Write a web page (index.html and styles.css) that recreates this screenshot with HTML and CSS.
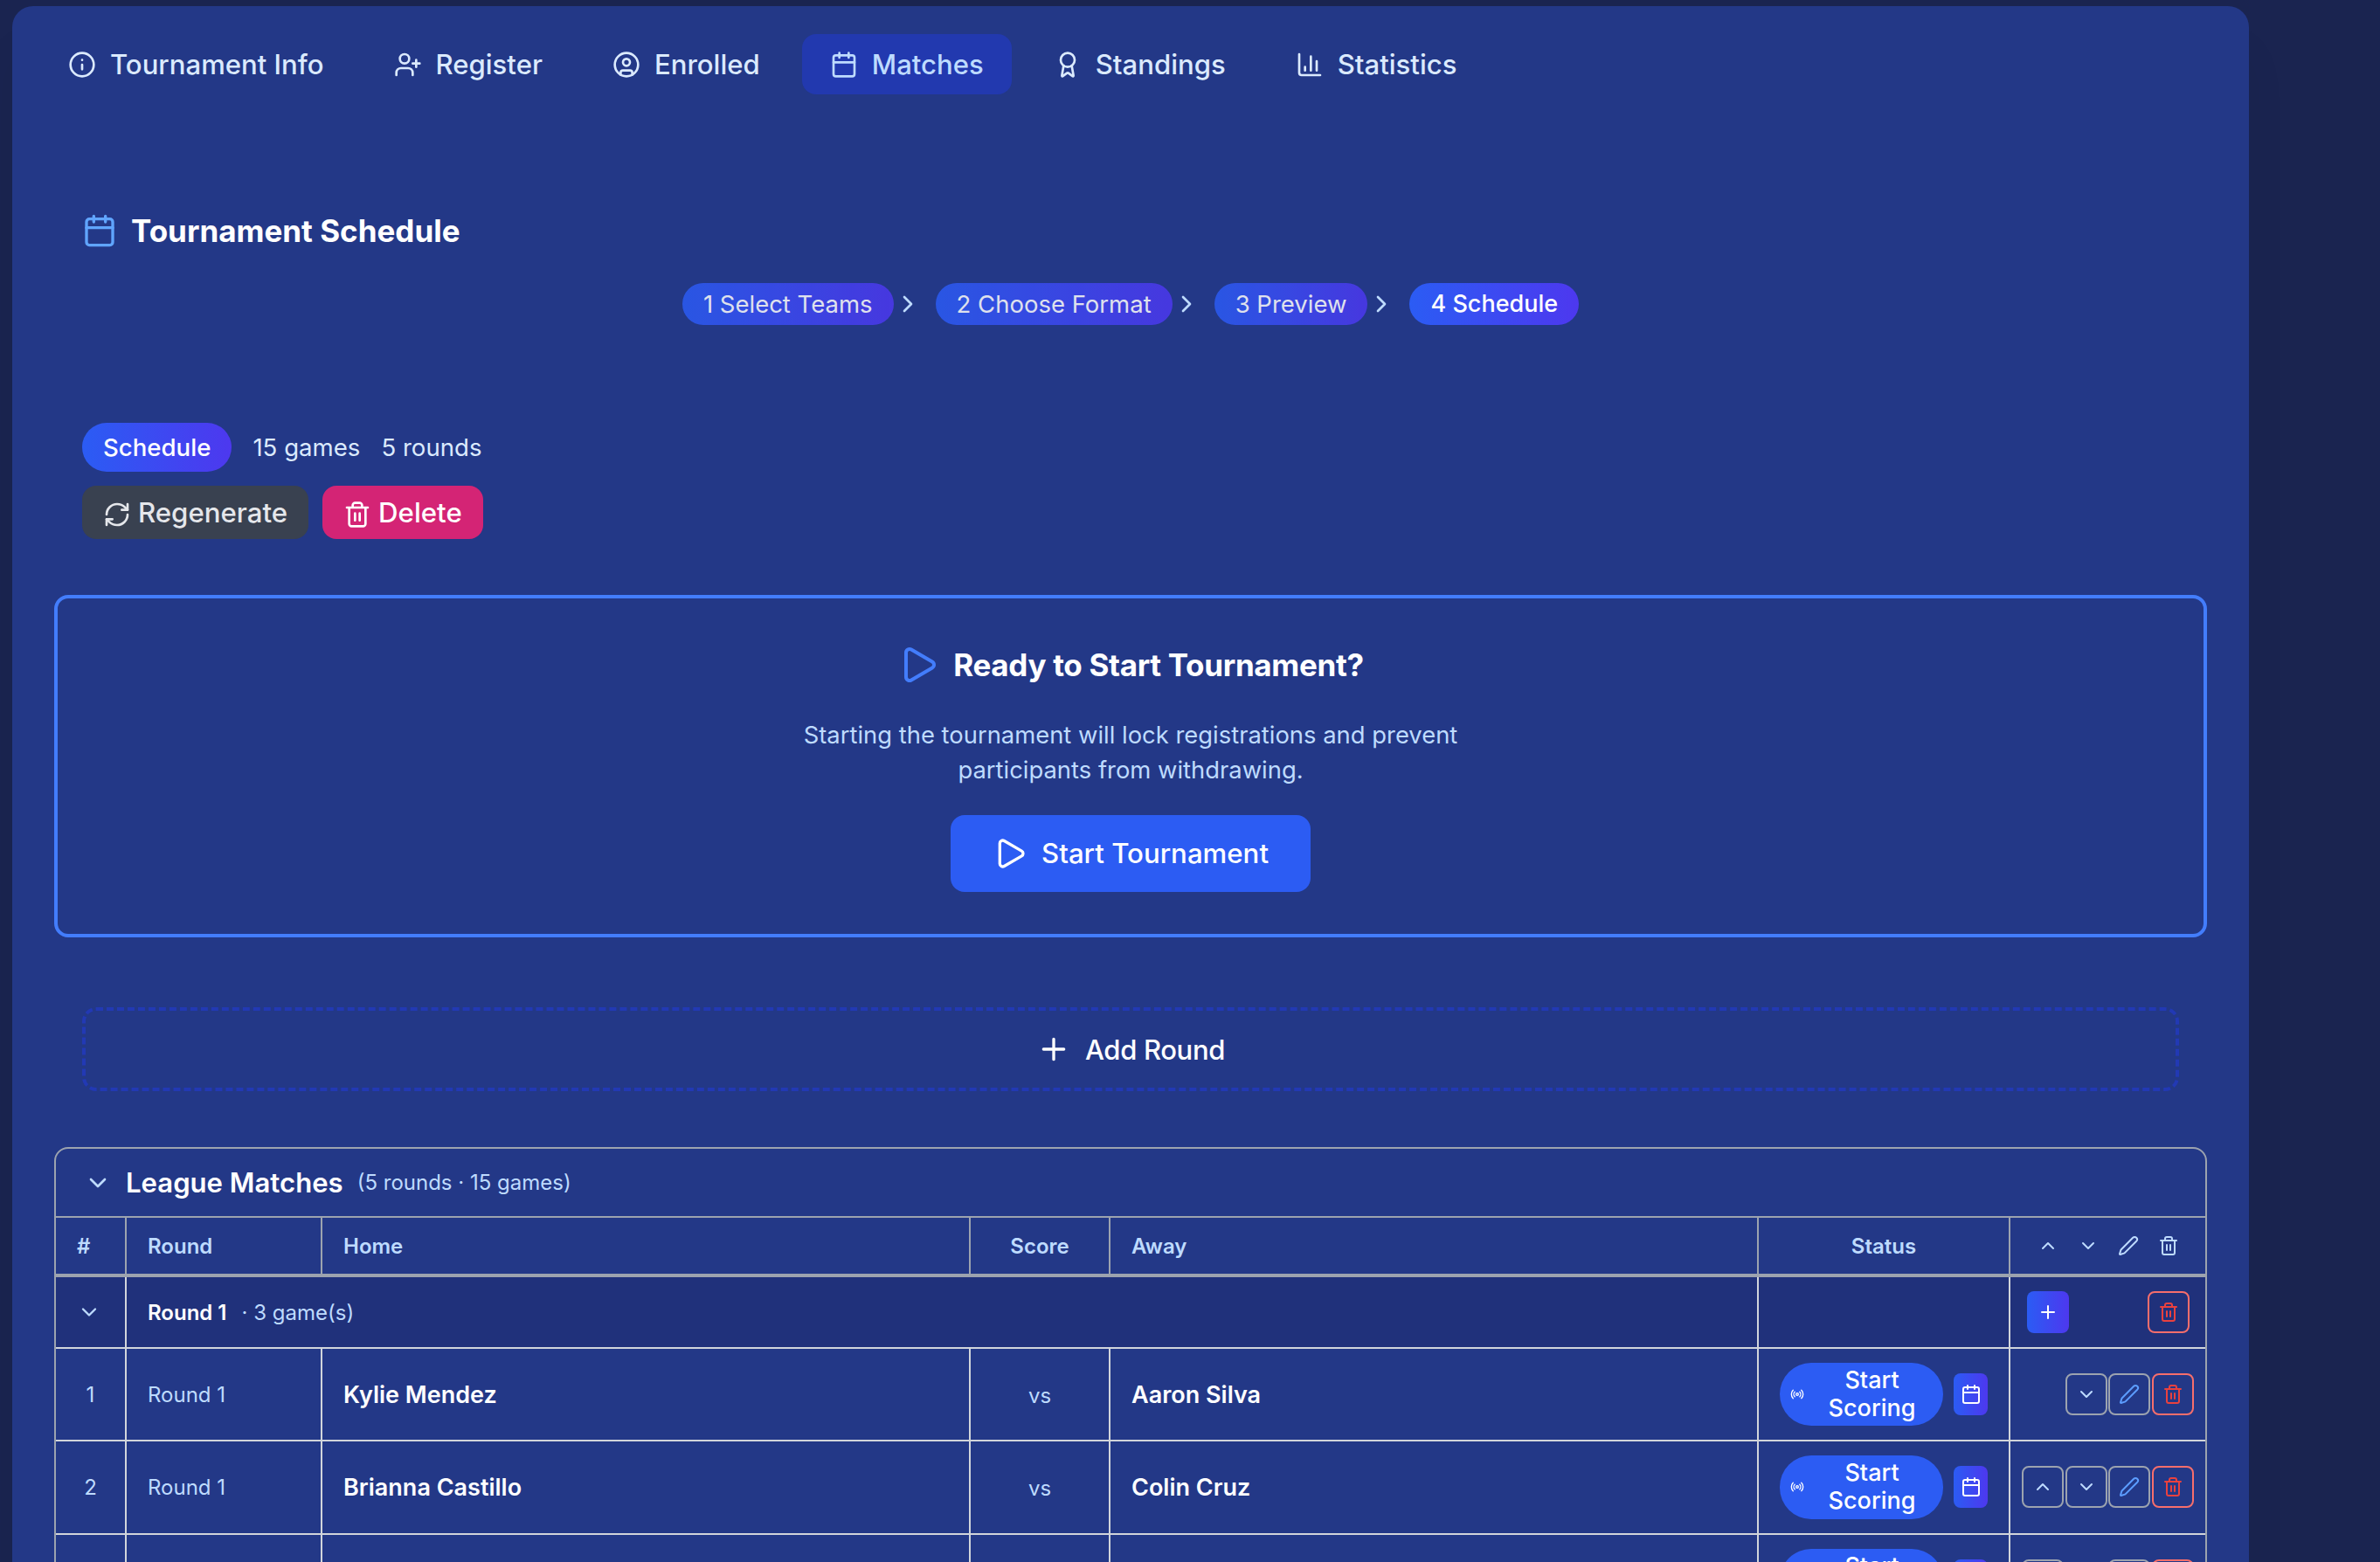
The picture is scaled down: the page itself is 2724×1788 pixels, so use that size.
FILE: index.html
```
<!DOCTYPE html>
<html lang="en">
<head>
<meta charset="UTF-8">
<meta name="viewport" content="width=device-width, initial-scale=1.0">
<title>Tournament Schedule</title>
<link rel="stylesheet" href="styles.css">
</head>
<body>

<!-- icons -->
<svg class="sprite">
  <symbol id="info" viewBox="0 0 24 24"><circle cx="12" cy="12" r="10"/><path d="M12 16v-4M12 8h.01"/></symbol>
  <symbol id="user-plus" viewBox="0 0 24 24"><path d="M16 21v-2a4 4 0 0 0-4-4H6a4 4 0 0 0-4 4v2"/><circle cx="9" cy="7" r="4"/><path d="M19 8v6M22 11h-6"/></symbol>
  <symbol id="user" viewBox="0 0 24 24"><circle cx="12" cy="12" r="10"/><circle cx="12" cy="10" r="3"/><path d="M7 20.662V19a2 2 0 0 1 2-2h6a2 2 0 0 1 2 2v1.662"/></symbol>
  <symbol id="calendar" viewBox="0 0 24 24"><path d="M8 2v4M16 2v4M3 10h18"/><rect x="3" y="4" width="18" height="18" rx="2"/></symbol>
  <symbol id="award" viewBox="0 0 24 24"><path d="m15.477 12.89 1.515 8.526a.5.5 0 0 1-.81.47l-3.58-2.687a1 1 0 0 0-1.197 0l-3.586 2.686a.5.5 0 0 1-.81-.469l1.514-8.526"/><circle cx="12" cy="8" r="6"/></symbol>
  <symbol id="chart" viewBox="0 0 24 24"><path d="M3 3v16a2 2 0 0 0 2 2h16M18 17V9M13 17V5M8 17v-3"/></symbol>
  <symbol id="right" viewBox="0 0 24 24"><path d="m9 18 6-6-6-6"/></symbol>
  <symbol id="down" viewBox="0 0 24 24"><path d="m6 9 6 6 6-6"/></symbol>
  <symbol id="up" viewBox="0 0 24 24"><path d="m18 15-6-6-6 6"/></symbol>
  <symbol id="plus" viewBox="0 0 24 24"><path d="M5 12h14M12 5v14"/></symbol>
  <symbol id="refresh" viewBox="0 0 24 24"><path d="M3 12a9 9 0 0 1 9-9 9.75 9.75 0 0 1 6.74 2.74L21 8"/><path d="M21 3v5h-5"/><path d="M21 12a9 9 0 0 1-9 9 9.75 9.75 0 0 1-6.74-2.74L3 16"/><path d="M8 16H3v5"/></symbol>
  <symbol id="trash" viewBox="0 0 24 24"><path d="M3 6h18M19 6v14c0 1-1 2-2 2H7c-1 0-2-1-2-2V6M8 6V4c0-1 1-2 2-2h4c1 0 2 1 2 2v2M10 11v6M14 11v6"/></symbol>
  <symbol id="pencil" viewBox="0 0 24 24"><path d="M21.174 6.812a1 1 0 0 0-3.986-3.987L3.842 16.174a2 2 0 0 0-.5.83l-1.321 4.352a.5.5 0 0 0 .623.622l4.353-1.32a2 2 0 0 0 .83-.497z"/></symbol>
  <symbol id="play" viewBox="0 0 24 24"><path d="M5 5a2 2 0 0 1 3.008-1.728l11.997 6.998a2 2 0 0 1 .003 3.458l-12 7A2 2 0 0 1 5 19z"/></symbol>
  <symbol id="radio" viewBox="0 0 24 24"><path d="M4.9 19.1C1 15.2 1 8.8 4.9 4.9M7.8 16.2c-2.3-2.3-2.3-6.1 0-8.5"/><circle cx="12" cy="12" r="2"/><path d="M16.2 7.8c2.3 2.3 2.3 6.1 0 8.5M19.1 4.9C23 8.8 23 15.1 19.1 19"/></symbol>
</svg>

<div class="card">
  <nav class="tabs">
    <a class="tab"><svg class="icon"><use href="#info"/></svg>Tournament Info</a>
    <a class="tab"><svg class="icon"><use href="#user-plus"/></svg>Register</a>
    <a class="tab"><svg class="icon"><use href="#user"/></svg>Enrolled</a>
    <a class="tab active"><svg class="icon"><use href="#calendar"/></svg>Matches</a>
    <a class="tab"><svg class="icon"><use href="#award"/></svg>Standings</a>
    <a class="tab"><svg class="icon"><use href="#chart"/></svg>Statistics</a>
  </nav>

  <h2 class="title"><svg class="icon icon-lg"><use href="#calendar"/></svg>Tournament Schedule</h2>

  <div class="steps">
    <span class="step">1 Select Teams</span><svg class="icon"><use href="#right"/></svg>
    <span class="step">2 Choose Format</span><svg class="icon"><use href="#right"/></svg>
    <span class="step">3 Preview</span><svg class="icon"><use href="#right"/></svg>
    <span class="step current">4 Schedule</span>
  </div>

  <div class="summary">
    <span class="badge">Schedule</span>
    <span>15 games</span>
    <span>5 rounds</span>
  </div>
  <div class="actions">
    <button class="btn btn-gray"><svg class="icon"><use href="#refresh"/></svg>Regenerate</button>
    <button class="btn btn-pink"><svg class="icon"><use href="#trash"/></svg>Delete</button>
  </div>

  <section class="ready">
    <h3><svg class="icon icon-xl"><use href="#play"/></svg>Ready to Start Tournament?</h3>
    <p>Starting the tournament will lock registrations and prevent<br>participants from withdrawing.</p>
    <button class="start"><svg class="icon icon-lg"><use href="#play"/></svg>Start Tournament</button>
  </section>

  <button class="add-round"><svg class="icon icon-lg"><use href="#plus"/></svg>Add Round</button>

  <section class="league">
    <div class="league-head">
      <svg class="icon"><use href="#down"/></svg>
      <h3>League Matches</h3>
      <span>(5 rounds · 15 games)</span>
    </div>

    <div class="row head">
      <div class="cell">#</div>
      <div class="cell">Round</div>
      <div class="cell">Home</div>
      <div class="cell center">Score</div>
      <div class="cell">Away</div>
      <div class="cell center">Status</div>
      <div class="cell tools">
        <svg class="icon icon-sm"><use href="#up"/></svg>
        <svg class="icon icon-sm"><use href="#down"/></svg>
        <svg class="icon icon-sm"><use href="#pencil"/></svg>
        <svg class="icon icon-sm"><use href="#trash"/></svg>
      </div>
    </div>

    <div class="row round">
      <div class="cell num"><svg class="icon icon-md"><use href="#down"/></svg></div>
      <div class="cell round-name"><b>Round 1</b><span>· 3 game(s)</span></div>
      <div class="cell"></div>
      <div class="cell tools">
        <button class="sq sq-add"><svg class="icon icon-sm"><use href="#plus"/></svg></button>
        <span></span>
        <span></span>
        <button class="sq sq-del"><svg class="icon icon-sm"><use href="#trash"/></svg></button>
      </div>
    </div>

    <div class="row game">
      <div class="cell num">1</div>
      <div class="cell">Round 1</div>
      <div class="cell team">Kylie Mendez</div>
      <div class="cell center vs">vs</div>
      <div class="cell team">Aaron Silva</div>
      <div class="cell status">
        <button class="score"><svg class="icon icon-xs"><use href="#radio"/></svg><span>Start Scoring</span></button>
        <button class="sq sq-cal"><svg class="icon icon-sm"><use href="#calendar"/></svg></button>
      </div>
      <div class="cell edit">
        <button class="sq"><svg class="icon icon-sm"><use href="#down"/></svg></button>
        <button class="sq sq-pen"><svg class="icon icon-sm"><use href="#pencil"/></svg></button>
        <button class="sq sq-del"><svg class="icon icon-sm"><use href="#trash"/></svg></button>
      </div>
    </div>

    <div class="row game">
      <div class="cell num">2</div>
      <div class="cell">Round 1</div>
      <div class="cell team">Brianna Castillo</div>
      <div class="cell center vs">vs</div>
      <div class="cell team">Colin Cruz</div>
      <div class="cell status">
        <button class="score"><svg class="icon icon-xs"><use href="#radio"/></svg><span>Start Scoring</span></button>
        <button class="sq sq-cal"><svg class="icon icon-sm"><use href="#calendar"/></svg></button>
      </div>
      <div class="cell edit">
        <button class="sq"><svg class="icon icon-sm"><use href="#up"/></svg></button>
        <button class="sq"><svg class="icon icon-sm"><use href="#down"/></svg></button>
        <button class="sq sq-pen"><svg class="icon icon-sm"><use href="#pencil"/></svg></button>
        <button class="sq sq-del"><svg class="icon icon-sm"><use href="#trash"/></svg></button>
      </div>
    </div>

    <div class="row game">
      <div class="cell num"></div>
      <div class="cell"></div>
      <div class="cell team"></div>
      <div class="cell center vs"></div>
      <div class="cell team"></div>
      <div class="cell status">
        <button class="score"><svg class="icon icon-xs"><use href="#radio"/></svg><span>Start Scoring</span></button>
        <button class="sq sq-cal"><svg class="icon icon-sm"><use href="#calendar"/></svg></button>
      </div>
      <div class="cell edit">
        <button class="sq"><svg class="icon icon-sm"><use href="#up"/></svg></button>
        <span class="sq-gap"></span>
        <button class="sq sq-pen"><svg class="icon icon-sm"><use href="#pencil"/></svg></button>
        <button class="sq sq-del"><svg class="icon icon-sm"><use href="#trash"/></svg></button>
      </div>
    </div>
  </section>
</div>

</body>
</html>
```
FILE: styles.css
```
* {
  padding: 0;
  margin: 0;
  box-sizing: border-box;
}

body {
  height: 100vh;
  padding: 7px 0 0 14px;
  overflow: hidden;
  background-color: #1a2450;
  font-family: Inter, sans-serif;
  color: #dbeafe;
}

button {
  border: none;
  background: none;
  font-family: inherit;
  color: inherit;
  cursor: pointer;
}

.sprite {
  display: none;
}

.icon {
  flex: none;
  width: 32px;
  height: 32px;
  fill: none;
  stroke: currentColor;
  stroke-width: 2;
  stroke-linecap: round;
  stroke-linejoin: round;
}

.icon-xs { width: 16px; height: 16px; }
.icon-sm { width: 24px; height: 24px; }
.icon-md { width: 28px; height: 28px; }
.icon-lg { width: 40px; height: 40px; }
.icon-xl { width: 48px; height: 48px; }

.card {
  width: 2560px;
  height: 1900px;
  padding: 32px 48px;
  border-radius: 24px;
  background-color: #233887;
  box-shadow: 0 50px 50px rgba(0, 0, 0, 0.05);
}

/* tabs */
.tabs {
  display: flex;
  gap: 16px;
  margin-left: -16px;
}

.tab {
  display: flex;
  align-items: center;
  gap: 16px;
  height: 69px;
  padding: 0 32px;
  border-radius: 16px;
  font-size: 31.1px;
  font-weight: 500;
}

.tab.active {
  background-color: #2239af;
  color: #bedbff;
}

.title {
  display: flex;
  align-items: center;
  gap: 16px;
  height: 40px;
  margin: 136px 32px 40px;
  font-size: 35px;
  color: #fff;
}

.title .icon {
  color: #60a5ff;
}

/* steps */
.steps {
  display: flex;
  justify-content: center;
  align-items: center;
}

.steps .icon {
  margin-right: 16px;
  color: #bedbff;
}

.step {
  height: 48px;
  padding: 0 24px;
  border-radius: 24px;
  background: linear-gradient(to right, #2b5cf4, #4d38ef);
  font-size: 27.5px;
  line-height: 48px;
  color: #fff;
  opacity: 0.85;
}

.step.current {
  font-size: 27px;
  font-weight: 500;
  opacity: 1;
}

/* summary */
.summary {
  display: flex;
  align-items: center;
  gap: 24px;
  margin: 112px 32px 16px;
  font-size: 27.6px;
}

.badge {
  height: 56px;
  padding: 0 24px;
  border-radius: 28px;
  background: linear-gradient(to right, #2b5cf4, #4d38ef);
  font-weight: 500;
  line-height: 56px;
  color: #fff;
}

.actions {
  display: flex;
  gap: 16px;
  margin: 0 32px;
}

.btn {
  display: flex;
  align-items: center;
  gap: 8px;
  height: 61px;
  padding: 0 24px;
  border-radius: 16px;
  font-size: 31.2px;
  font-weight: 500;
}

.btn .icon {
  margin-top: 5px;
}

.btn-gray {
  background-color: #394150;
  color: #e5e7eb;
}

.btn-pink {
  background-color: #d42475;
  color: #fff;
}

/* start tournament */
.ready {
  display: flex;
  flex-direction: column;
  align-items: center;
  height: 392px;
  margin-top: 64px;
  padding: 48px 0;
  border: 4px solid #437dfc;
  border-radius: 16px;
}

.ready h3 {
  display: flex;
  align-items: center;
  gap: 16px;
  height: 56px;
  font-size: 35px;
  letter-spacing: -0.32px;
  color: #fff;
}

.ready h3 .icon {
  color: #437dfc;
}

.ready p {
  margin: 32px 0;
  font-size: 27.4px;
  line-height: 40px;
  text-align: center;
  color: #bedbff;
}

.start {
  display: flex;
  align-items: center;
  gap: 16px;
  height: 88px;
  padding: 0 48px;
  border-radius: 16px;
  background-color: #2c5cf3;
  font-size: 31.2px;
  font-weight: 500;
  color: #fff;
}

.add-round {
  display: flex;
  justify-content: center;
  align-items: center;
  gap: 16px;
  width: 2400px;
  height: 96px;
  margin: 80px 32px 64px;
  border: 4px dashed #2239b4;
  border-radius: 16px;
  font-size: 31px;
  font-weight: 500;
  letter-spacing: -0.35px;
  color: #fff;
}

/* league table */
.league {
  border: 2px solid #9ca3af;
  border-radius: 16px 16px 0 0;
  font-size: 24px;
  color: #bedbff;
}

.league-head {
  display: flex;
  align-items: center;
  gap: 16px;
  height: 79px;
  padding: 0 32px;
  border-bottom: 2px solid #9ca3af;
}

.league-head h3 {
  font-size: 31.1px;
  font-weight: 600;
  color: #fff;
}

.row {
  display: grid;
  grid-template-columns: 81px 224px 1fr 160px 1fr 288px 223px;
  border-bottom: 2px solid #d1d5db;
}

.cell {
  display: flex;
  align-items: center;
  padding: 0 24px;
  border-right: 2px solid #d1d5db;
}

.cell:last-child {
  border-right: none;
}

.center {
  justify-content: center;
}

.num {
  justify-content: center;
  padding: 0;
}

.head {
  height: 68px;
  border-bottom: 4px solid #9ca3af;
  font-weight: 600;
}

.head .cell {
  border-color: #9ca3af;
}

.tools {
  display: grid;
  grid-template-columns: repeat(4, 46px);
  justify-content: center;
  justify-items: center;
  padding: 0;
}

.tools .sq {
  margin: 0 -1px;
}

.round {
  height: 82px;
  background-color: #20317b;
}

.round .num {
  padding-right: 3px;
}

.round-name {
  grid-column: 2 / 6;
  gap: 17px;
}

.round-name b {
  font-weight: 600;
  color: #fff;
}

.game {
  height: 106.3px;
}

.team {
  font-size: 27px;
  font-weight: 600;
  color: #fff;
}

.vs {
  padding-top: 3px;
}

.status {
  gap: 12px;
}

.score {
  display: flex;
  align-items: center;
  gap: 8px;
  width: 187px;
  height: 72.3px;
  padding: 4px 12px;
  border-radius: 36px;
  background-color: #2c5cf3;
  font-size: 27px;
  font-weight: 500;
  line-height: 32.15px;
  color: #fff;
}

.score span {
  flex: 1;
}

.edit {
  justify-content: flex-end;
  gap: 1.6px;
  padding: 0 13px 0 0;
}

.sq {
  display: flex;
  justify-content: center;
  align-items: center;
  width: 48px;
  height: 48px;
  border: 2px solid #9ca3af;
  border-radius: 8px;
}

.sq-gap {
  width: 48px;
}

.sq-pen {
  color: #5c9dff;
}

.sq-del {
  border-color: #f66e6c;
  color: #e9413f;
}

.sq-add,
.sq-cal {
  border: none;
  background: linear-gradient(to right, #2b5cf4, #4d38ef);
  color: #fff;
}

.sq-cal {
  width: 39px;
}
```
